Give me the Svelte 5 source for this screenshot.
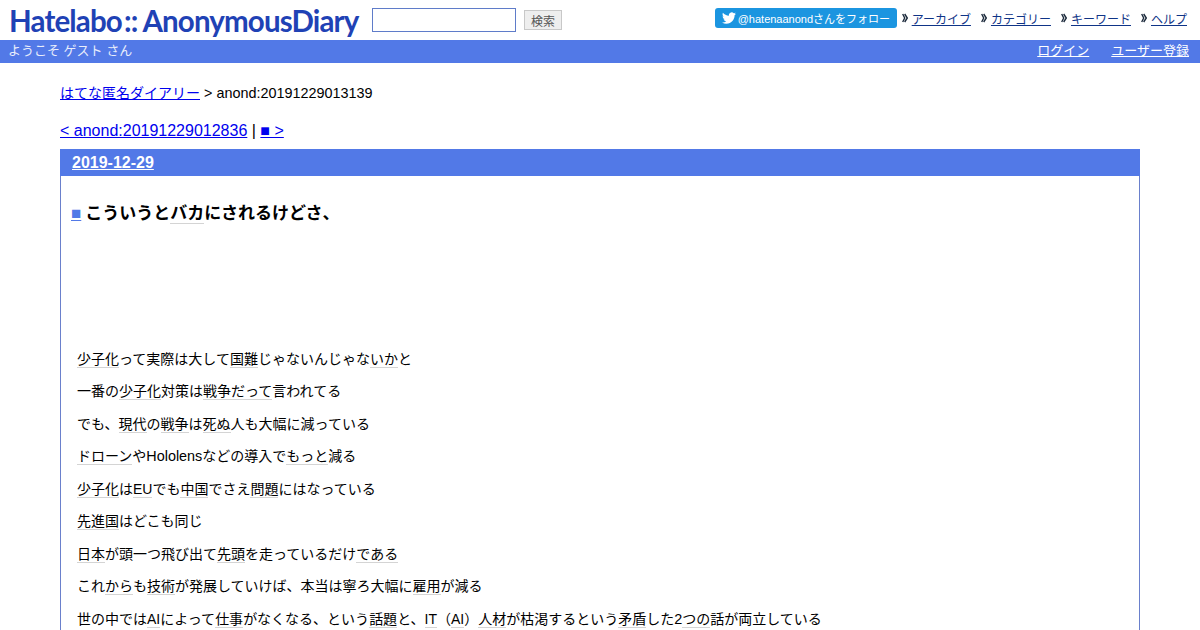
<script lang="ts">
  type Seg = string | { k?: string; l?: string };
  const k = (s: string) => ({ k: s });
  const l = (s: string) => ({ l: s });

  const navLinks = ["アーカイブ", "カテゴリー", "キーワード", "ヘルプ"];

  const lines: Seg[][] = [
    [k("少子化"), "って実際は大して", k("国難"), "じゃないんじゃな", k("いか"), "と"],
    ["一番の", k("少子化"), "対策は", k("戦争"), k("だって"), "言われてる"],
    ["でも、", k("現代"), "の", k("戦争"), "は", k("死ぬ"), "人も大幅に減っている"],
    [k("ドローン"), "や", l("Hololens"), "などの導入で", k("もっと"), "減る"],
    [k("少子化"), "は", k("EU"), "でも", k("中国"), "でさえ", k("問題"), "にはなっている"],
    [k("先進国"), "はどこも同じ"],
    [k("日本"), "が頭一つ飛び出て", k("先頭"), "を走っているだけ", k("である")],
    ["これ", k("から"), "も", k("技術"), "が発展していけば、本当は寧ろ大幅に", k("雇用"), "が減る"],
    [
      "世の中では", k("AI"), "によって", k("仕事"), "がなくなる、という", k("話題"), "と、",
      k("IT"), "（", k("AI"), "）", k("人材"), "が枯渇するという", k("矛盾"), "した", l("2"), k("つの"),
      "話が両立している",
    ],
  ];
</script>

<header class="top">
  <div class="brand">
    <a class="logo" href="#top">Hatelabo<span class="colons">::</span>AnonymousDiary</a>
    <form class="search" onsubmit={(e) => e.preventDefault()}>
      <input type="text" class="search-input" />
      <button type="submit" class="search-btn">検索</button>
    </form>
  </div>
  <nav class="menu">
    <a class="follow" href="#top">
      <svg viewBox="0 0 24 24" width="14" height="14" aria-hidden="true">
        <path
          fill="#fff"
          d="M23.953 4.57a10 10 0 01-2.825.775 4.958 4.958 0 002.163-2.723c-.951.555-2.005.959-3.127 1.184a4.92 4.92 0 00-8.384 4.482C7.69 8.095 4.067 6.13 1.64 3.162a4.822 4.822 0 00-.666 2.475c0 1.71.87 3.213 2.188 4.096a4.904 4.904 0 01-2.228-.616v.06a4.923 4.923 0 003.946 4.827 4.996 4.996 0 01-2.212.085 4.936 4.936 0 004.604 3.417 9.867 9.867 0 01-6.102 2.105c-.39 0-.779-.023-1.17-.067a13.995 13.995 0 007.557 2.209c9.053 0 13.998-7.496 13.998-13.985 0-.21 0-.42-.015-.63A9.935 9.935 0 0024 4.59z"
        />
      </svg>
      <span>@hatenaanondさんをフォロー</span>
    </a>
    {#each navLinks as link}
      <span class="menu-item">
        <svg class="arrow" viewBox="0 0 6 10" width="6" height="10" aria-hidden="true">
          <path d="M0.7 1l2 4-2 4M2.7 1l2.6 4-2.6 4" fill="none" stroke="#1c2a3c" stroke-width="1.4" />
        </svg>
        <a href="#top">{link}</a>
      </span>
    {/each}
  </nav>
</header>

<div class="userbar">
  <span>ようこそ ゲスト さん</span>
  <span class="user-links">
    <a href="#top">ログイン</a>
    <a href="#top">ユーザー登録</a>
  </span>
</div>

<main class="content">
  <p class="crumbs"><a href="#top">はてな匿名ダイアリー</a> &gt; anond:20191229013139</p>
  <p class="pager"><a href="#top">&lt; anond:20191229012836</a> | <a href="#top">■ &gt;</a></p>

  <section class="day">
    <h2 class="day-head"><a href="#top">2019-12-29</a></h2>
    <div class="day-body">
      <h3 class="title">
        <a class="sanchor" href="#top">■</a>
        <span>こういうと<a class="kw" href="#top">バカ</a>にされるけどさ、</span>
      </h3>
      {#each lines as line}
        <p class="para">
          {#each line as seg}
            {#if typeof seg === "string"}{seg}{:else if seg.l}<span class="lat">{seg.l}</span>{:else}<a class="kw" href="#top">{seg.k}</a>{/if}
          {/each}
        </p>
      {/each}
    </div>
  </section>
</main>

<style>
  :global(body) {
    margin: 0;
    background: #fff;
    color: #000;
    font-family: "Liberation Sans", "Noto Sans CJK JP", sans-serif;
    overflow: hidden;
  }

  .top {
    display: flex;
    justify-content: space-between;
    height: 40px;
  }

  .brand {
    display: flex;
    align-items: flex-start;
  }

  .logo {
    width: 363px;
    margin-left: 9px;
    font-family: Lato, "Liberation Sans", sans-serif;
    font-size: 29.5px;
    font-weight: 700;
    letter-spacing: -0.85px;
    line-height: 41px;
    color: #1f42b5;
    text-decoration: none;
    white-space: nowrap;
  }

  .colons {
    margin: 0 5px 0 2px;
  }

  .search {
    display: flex;
    align-items: center;
    gap: 8px;
    height: 40px;
  }

  .search-input {
    box-sizing: border-box;
    width: 144px;
    height: 24px;
    margin: 0;
    border: 1px solid #5f7cc9;
    background: #fff;
  }

  .search-btn {
    box-sizing: border-box;
    width: 38px;
    height: 20px;
    padding: 0;
    border: 1px solid #c8c8c8;
    background: #eee;
    color: #555;
    font-family: inherit;
    font-size: 12px;
  }

  .menu {
    display: flex;
    align-items: center;
    height: 36px;
    padding-right: 13px;
    font-size: 12px;
  }

  .follow {
    display: flex;
    align-items: center;
    gap: 2px;
    box-sizing: border-box;
    width: 182px;
    height: 20px;
    padding-left: 7px;
    border-radius: 3px;
    background: #1b95e0;
    color: #fff;
    font-size: 11px;
    text-decoration: none;
    white-space: nowrap;
  }

  .menu-item {
    display: flex;
    align-items: center;
    gap: 4px;
    margin-left: 10px;
  }

  .menu-item:nth-child(2) {
    margin-left: 5px;
  }

  .menu-item a {
    color: #0f3487;
  }

  .userbar {
    display: flex;
    justify-content: space-between;
    box-sizing: border-box;
    height: 23px;
    padding: 0 11px 0 8px;
    background: #5279e7;
    color: #e8edfb;
    font-size: 13px;
    line-height: 22px;
  }

  .user-links {
    display: flex;
    gap: 22px;
  }

  .user-links a {
    color: #fff;
  }

  .content {
    margin: 0 60px;
  }

  .crumbs {
    margin: 0;
    padding-top: 20px;
    font-size: 14.4px;
    line-height: 20px;
  }

  .crumbs a {
    font-size: 14px;
  }

  .pager {
    margin: 0;
    padding-top: 18px;
    font-size: 16px;
    line-height: 20px;
  }

  .day {
    margin-top: 8px;
    border: 1px solid #6a80cc;
    border-top: none;
  }

  .day-head {
    box-sizing: border-box;
    height: 27px;
    margin: 0 -1px;
    padding-left: 12px;
    background: #5279e7;
    font-size: 16px;
    line-height: 27px;
  }

  .day-head a {
    color: #fff;
  }

  .day-body {
    padding: 0 16px 0 10px;
  }

  .title {
    display: flex;
    gap: 4px;
    margin: 27px 0 0;
    font-size: 17px;
    line-height: 22px;
  }

  .sanchor {
    color: #5279e7;
  }

  .para {
    margin: 0 0 11px 6px;
    font-size: 14px;
    line-height: 21px;
    white-space: nowrap;
  }

  .para:nth-of-type(even) {
    margin-bottom: 12px;
  }

  .title + .para {
    margin-top: 124px;
  }

  .lat {
    font-size: 14.4px;
  }

  .kw {
    color: inherit;
    text-decoration: none;
    border-bottom: 1px solid #d4d4d4;
  }
</style>
